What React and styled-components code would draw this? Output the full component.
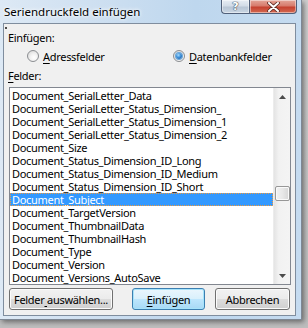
import React from "react";
import styled, { createGlobalStyle } from "styled-components";

const Global = createGlobalStyle`
  html, body { margin: 0; padding: 0; }
  body {
    width: 308px; height: 328px; overflow: hidden;
    background: #c3c3c3;
    font-family: "Noto Sans", "Open Sans", sans-serif;
    color: #000;
  }
`;

const Screen = styled.div`
  width: 308px; height: 328px;
  background: linear-gradient(180deg, #cfcfcf 0%, #bdbdbd 100%);
`;

const Window = styled.div`
  width: 302px; height: 320px; box-sizing: border-box;
  display: flex; flex-direction: column;
  padding: 0 5px 3px 3px;
  background: linear-gradient(90deg, #dde9f5 0%, #cfe0f1 30%, #bed7ee 65%, #c5dbf0 100%);
  border-right: 1px solid #7d8794;
  border-bottom: 1px solid #7d8794;
  box-shadow: 2px 2px 5px rgba(0,0,0,0.45);
`;

const TitleBar = styled.div`
  height: 23px; flex: none;
  display: flex; align-items: flex-start;
`;

const Title = styled.div`
  padding: 4px 0 0 1px;
  font-size: 11.5px; line-height: 15px;
  text-shadow: 0 0 5px #fff, 0 0 3px #fff;
`;

const Caption = styled.div`
  margin-left: auto; display: flex; margin-right: -1px;
`;

const CapButton = styled.div`
  height: 14px; box-sizing: border-box;
  width: ${p => p.$w}px;
  display: flex; align-items: center; justify-content: center;
  border: 1px solid #51607a; border-top: none;
  border-radius: ${p => p.$first ? "0 0 0 4px" : "0 0 4px 0"};
  ${p => p.$first ? "border-right: none;" : ""}
  background: ${p => p.$close
    ? "linear-gradient(180deg, #e3a699 0%, #d77b6c 45%, #c5412f 55%, #d46a52 100%)"
    : "linear-gradient(180deg, #e7edf4 0%, #d3dce7 45%, #b9c6d5 55%, #c9d6e4 100%)"};
  box-shadow: inset 0 0 0 1px rgba(255,255,255,0.45);
`;

const Help = styled.span`
  font-family: "DejaVu Sans", sans-serif; font-weight: bold;
  font-size: 11px; line-height: 11px; color: #fff;
  margin-top: -1px;
  text-shadow: 0 0 1px #3d4b5c, 0 0 1px #3d4b5c, 0 0 1px #3d4b5c;
`;

const Panel = styled.div`
  flex: 1; position: relative;
  display: flex; flex-direction: column;
  background: #f0f0f0;
  border: 1px solid #7f8d9e;
  font-size: 11px; letter-spacing: -0.3px;
  &::before {
    content: ""; position: absolute; left: 1px; top: 3px;
    width: 2px; height: 2px; background: #4a4a4a;
  }
`;

const Label = styled.div`
  padding: ${p => p.$top}px 0 0 4px;
  line-height: 15px; height: 15px;
`;

const U = styled.span` text-decoration: underline; text-underline-offset: 2px; white-space: pre; `;

const RadioRow = styled.div`
  margin-top: 3px; height: 16px;
  display: grid; grid-template-columns: 146px auto;
  padding-left: 23px;
`;

const RadioItem = styled.label`
  display: flex; align-items: center; gap: 4px;
  line-height: 15px;
`;

const RadioCircle = styled.span`
  width: 12px; height: 12px; box-sizing: border-box; flex: none;
  border-radius: 50%;
  border: 1px solid #8b8e92;
  background: radial-gradient(circle at 60% 65%, #ffffff 0%, #f2f2f2 40%, #d2d2d2 100%);
  display: flex; align-items: center; justify-content: center;
  &::after {
    content: "";
    width: 6px; height: 6px; border-radius: 50%;
    display: ${p => p.$on ? "block" : "none"};
    background: radial-gradient(circle at 40% 35%, #a8dcff 0%, #3b8fd8 45%, #15509a 100%);
    box-shadow: 0 0 0 1px #6aa6d8;
  }
`;

const List = styled.div`
  margin: 4px 4px 0 5px;
  height: 198px; box-sizing: border-box;
  border: 1px solid #828790;
  background: #fff;
  display: flex;
`;

const Rows = styled.div`
  flex: 1; padding-top: 1px; min-width: 0;
`;

const Row = styled.div`
  height: 13px; line-height: 13px;
  padding-left: 2px; white-space: nowrap;
  box-sizing: border-box;
  ${p => p.$sel ? `
    background: #3399ff; color: #fff;
    outline: 1px dotted #f19a3c; outline-offset: -1px;
  ` : ""}
`;

const ScrollBar = styled.div`
  width: 17px; flex: none;
  display: flex; flex-direction: column;
  background: linear-gradient(90deg, #e4e4e4 0%, #f2f2f2 30%, #f4f4f4 100%);
  border-left: 1px solid #ececec;
  box-sizing: border-box;
`;

const Arrow = styled.div`
  height: 17px; flex: none;
  display: flex; align-items: center; justify-content: center;
`;

const Track = styled.div`
  flex: 1; display: flex; flex-direction: column; align-items: center;
`;

const Spacer = styled.div` flex: none; `;

const Thumb = styled.div`
  width: 15px; height: 15px; box-sizing: border-box; flex: none;
  border: 1px solid #979797; border-radius: 2px;
  background: linear-gradient(90deg, #f3f3f3 0%, #e8e8e8 50%, #d6d6d6 100%);
  box-shadow: inset 0 0 0 1px #fafafa;
`;

const ButtonRow = styled.div`
  margin-top: 3px; padding: 0 5px;
  display: flex; gap: 10px;
`;

const Button = styled.div`
  width: ${p => p.$w}px; height: 22px; box-sizing: border-box;
  ${p => p.$push ? "margin-left: auto;" : ""}
  display: flex; align-items: center; justify-content: center;
  border: 1px solid ${p => p.$def ? "#3c7fb1" : "#707070"};
  border-radius: 3px;
  background: ${p => p.$def
    ? "linear-gradient(180deg, #eaf6fd 0%, #d9f0fc 49%, #bee6fd 50%, #a7d9f5 100%)"
    : "linear-gradient(180deg, #f2f2f2 0%, #ebebeb 49%, #dddddd 50%, #cfcfcf 100%)"};
  box-shadow: inset 0 0 0 1px ${p => p.$def ? "#a6e3fb" : "#fbfbfb"};
  line-height: 15px; white-space: nowrap;
`;

const items = [
  "Document_SerialLetter_Data",
  "Document_SerialLetter_Status_Dimension_",
  "Document_SerialLetter_Status_Dimension_1",
  "Document_SerialLetter_Status_Dimension_2",
  "Document_Size",
  "Document_Status_Dimension_ID_Long",
  "Document_Status_Dimension_ID_Medium",
  "Document_Status_Dimension_ID_Short",
  "Document_Subject",
  "Document_TargetVersion",
  "Document_ThumbnailData",
  "Document_ThumbnailHash",
  "Document_Type",
  "Document_Version",
  "Document_Versions_AutoSave",
];

const Tri = ({ up }) => (
  <svg width="7" height="4" viewBox="0 0 7 4">
    <path d={up ? "M0 4 L3.5 0 L7 4 Z" : "M0 0 L3.5 4 L7 0 Z"} fill="#4b4b4b" />
  </svg>
);

const CloseX = () => (
  <svg width="13" height="10" viewBox="0 0 13 10">
    <path d="M2 1 L11 9 M11 1 L2 9" stroke="#5a2a22" strokeWidth="3.6" strokeLinecap="round" />
    <path d="M2 1 L11 9 M11 1 L2 9" stroke="#fff" strokeWidth="2" strokeLinecap="round" />
  </svg>
);

export default function App() {
  const thumbOffset = 81;
  return (
    <Screen>
      <Global />
      <Window>
        <TitleBar>
          <Title>Seriendruckfeld einfügen</Title>
          <Caption>
            <CapButton $w={28} $first><Help>?</Help></CapButton>
            <CapButton $w={48} $close><CloseX /></CapButton>
          </Caption>
        </TitleBar>
        <Panel>
          <Label $top={6}>Einfügen:</Label>
          <RadioRow>
            <RadioItem><RadioCircle /><span><U>A</U>dressfelder</span></RadioItem>
            <RadioItem><RadioCircle $on /><span><U>D</U>atenbankfelder</span></RadioItem>
          </RadioRow>
          <Label $top={4}><U>F</U>elder:</Label>
          <List>
            <Rows>
              {items.map(t => (
                <Row key={t} $sel={t === "Document_Subject"}>{t}</Row>
              ))}
            </Rows>
            <ScrollBar>
              <Arrow><Tri up /></Arrow>
              <Track>
                <Spacer style={{ height: thumbOffset }} />
                <Thumb />
              </Track>
              <Arrow><Tri /></Arrow>
            </ScrollBar>
          </List>
          <ButtonRow>
            <Button $w={104}><span>Felder<U> </U>auswählen...</span></Button>
            <Button $w={73} $def $push><span><U>E</U>infügen</span></Button>
            <Button $w={75}>Abbrechen</Button>
          </ButtonRow>
        </Panel>
      </Window>
    </Screen>
  );
}
